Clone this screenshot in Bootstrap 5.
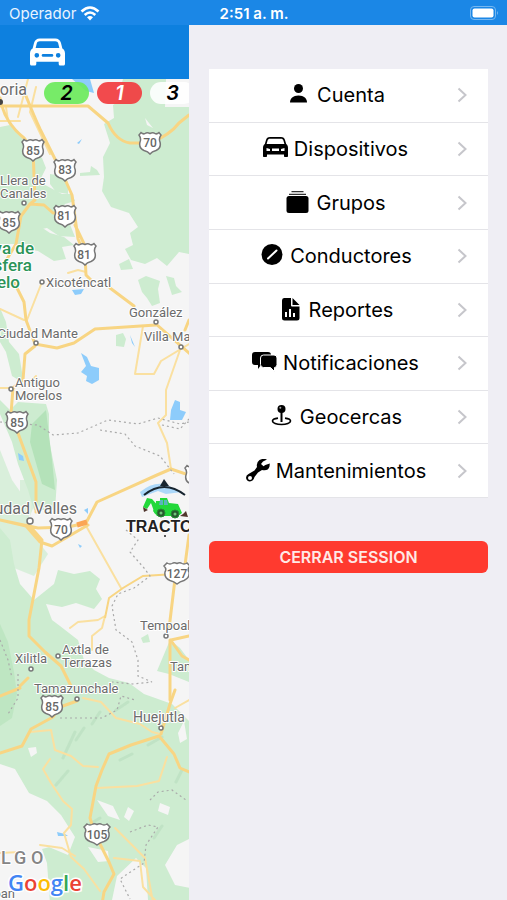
<!DOCTYPE html>
<html lang="es">
<head>
<meta charset="utf-8">
<meta name="viewport" content="width=device-width, initial-scale=1">
<title>Operador</title>
<link rel="stylesheet" href="https://cdn.jsdelivr.net/npm/bootstrap@5.3.0/dist/css/bootstrap.min.css">
<style>
body{font-family:Inter,"Liberation Sans",sans-serif;background:#efeef4;color:#000}
.status-bar{height:25px;background:#1b87e6;color:#e9f4ff;font-size:15px;line-height:25px;padding:2px 8px 0 9px}
.status-time{font-weight:600;color:#fff}
.side-slot{flex:1 1 0}
.map-pane{min-width:0}
.map-head{height:54px;background:#0d80df;padding-left:30px}
.map-area{background:#f5f5f5;min-height:821px}
.map-svg{width:100%;height:100%;left:0;top:0}
.counters{gap:8px;padding:3px 0 0 44px;left:0;top:0}
.pill{flex:0 0 auto;width:45px;height:22px;border-radius:11px;font-size:20px;line-height:22px;font-weight:600;font-style:italic;text-align:center}
.pill-on{background:#6bea5ae8}.pill-off{background:#f2393de8;color:#fff}.pill-all{background:#ffffffe0}
.drawer{flex:0 0 318px;padding:44px 19px 0 20px}
.menu-list{min-height:429px;border-radius:0}
.menu-row{border:0;border-bottom:1px solid #e4e4e8;border-radius:0!important;padding:0 21px 0 5px;font-size:20px;line-height:24px;color:#000;background:#fff}
.menu-body{gap:6px}
.logout{margin-top:43px;height:32px;background:#ff3a2f;color:#ffe9e6;border-radius:6px;font-size:16px;line-height:20px;font-weight:600;padding:0}
.logout:hover{background:#e8342a;color:#fff}
.town{font-family:Roboto,sans-serif;fill:#6b6b6b;stroke:#fff;stroke-width:2px;paint-order:stroke;stroke-linejoin:round;font-size:13px}
.town-md{font-size:14px}
.town-lg{font-size:16px}
.park{font-size:17px;fill:#2b9458;font-weight:500}
.region{font-size:18px;font-weight:500;fill:#858585}
.route{font-family:Roboto,sans-serif;font-size:12px;font-weight:500;fill:#666;text-anchor:middle}
.unit{font:bold 16px "Liberation Sans",sans-serif;fill:#222;stroke:#fff;stroke-width:2px;paint-order:stroke}
.brand{font:600 22px "Open Sans",sans-serif;stroke:#fff;stroke-width:3px;paint-order:stroke}
</style>
<script src="https://cdn.jsdelivr.net/npm/bootstrap@5.3.0/dist/js/bootstrap.bundle.min.js"></script>
</head>
<body>
<svg class="d-none" aria-hidden="true">
  <symbol id="car" viewBox="0 0 36 28"><path fill-rule="evenodd" d="M10 0h16c3 0 5 1.700 5.800 4.500l1.500 6C35 11.500 36 13 36 15.500V26c0 1.200-.8 2-2 2h-2.500c-1.200 0-2-.8-2-2v-2h-23v2c0 1.200-.8 2-2 2H2c-1.200 0-2-.8-2-2V15.500c0-2.500 1-4 2.700-5l1.500-6C5 1.700 7 0 10 0zM10 3C8.500 3 7.500 3.700 7 5L5.800 10h24.400L29 5c-.5-1.300-1.500-2-3-2zM7 15a2.400 2.400 0 100 4.800A2.400 2.400 0 007 15zm22 0a2.400 2.400 0 100 4.800A2.400 2.400 0 0029 15zm-15.500 1a1.500 1.500 0 000 3h9a1.500 1.500 0 000-3z"/></symbol>
  <symbol id="carbox" viewBox="0 0 25 20"><path fill-rule="evenodd" d="M7 0h11c2.300 0 3.500 1.200 4 3l1.200 4C24.500 8 25 9 25 11v8c0 .6-.4 1-1 1h-2c-.6 0-1-.4-1-1v-1.500H4V19c0 .6-.4 1-1 1H1c-.6 0-1-.4-1-1v-8c0-2 .5-3 1.800-4L3 3c.5-1.800 1.700-3 4-3zM7 1.700C5.700 1.700 5 2.300 4.600 3.500L3.600 7h17.800l-1-3.500C20 2.300 19.300 1.700 18 1.700zM3.500 11v3H7v-2zm5.500.5V14h7v-2.500zm12.500-.5L18 12v2h3.500z"/></symbol>
  <symbol id="chevron" viewBox="0 0 10 16"><path d="M1.500 1.500L8.500 8l-7 6.500" fill="none" stroke="#c6c6cb" stroke-width="2"/></symbol>
  <symbol id="shield" viewBox="-12 -12 24 24"><path d="M-9-10.500Q-6.500-8-4-10-2-10.500 0-9.500 2-10.500 4-10 6.500-8 9-10.500L11-8Q8.500-4.500 10-1 11.500 5 6 7.500 2 8.500 0 11-2 8.500-6 7.500-11.500 5-10-1-8.500-4.500-11-8z" fill="#fff" stroke="#777" stroke-width="1.500"/></symbol>
</svg>
<div class="d-flex flex-column min-vh-100">
  <header class="status-bar d-flex align-items-center">
    <div class="side-slot d-flex align-items-center gap-1"><span>Operador</span>
      <svg width="20" height="15" viewBox="0 0 20 15" aria-hidden="true"><g fill="none" stroke="#fff" stroke-width="2.600"><path d="M1.500 5.500Q10-2.500 18.500 5.500M4.700 9Q10 4 15.300 9"/></g><path d="M7 11.200q3-2.400 6 0l-3 3.300z" fill="#fff"/></svg>
    </div>
    <span class="status-time">2:51 a. m.</span>
    <div class="side-slot d-flex justify-content-end"><svg width="29" height="15" viewBox="0 0 29 15" aria-label="Batería" role="img"><rect x=".5" y=".5" width="25" height="13" rx="3.500" fill="none" stroke="#76b7f0"/><rect x="2.500" y="2.500" width="21" height="9" rx="2" fill="#fff"/><path d="M27 5q2 2 0 4z" fill="#76b7f0"/></svg></div>
  </header>
  <div class="d-flex flex-grow-1">
    <main class="map-pane d-flex flex-column flex-grow-1 overflow-hidden">
      <div class="map-head d-flex align-items-center"><svg width="35" height="28" fill="#fff" role="img" aria-label="Dispositivos"><use href="#car"/></svg></div>
      <div class="map-area flex-grow-1 position-relative overflow-hidden">
        <svg class="map-svg position-absolute" viewBox="0 79 189 821" preserveAspectRatio="xMinYMin slice">
          <g fill="#cdecd0">
            <path d="M0 127l10-2 12 13 8 12 12 8 4 10-7 14 8 4 15 8 10 0 3 7-10 3-6 10 10 8 6 15-16-1-12-8-10 2-8 14H0z"/>
            <path d="M118 96l5-17h43l-1 28 24 0v147l-10-2-12 14-10-8-12 6-14-4-6-11 8-4-3-12 8-6-9-14-18-6-9-16 2-14-1-20 7-14-6-19 10-6-1-13 9-6z"/>
            <path d="M80 173l10-1 1-6 6 4 3 5-20 1zM50 174l12 2 6 6 0 12-12-2-6-8zM38 225l12 8 14 4 10 8-12 2 4 12-12 2-16-10-12-2 6-12zM119 264l10-5 4 10-12 1zM138 280l8-4 14 5-2 8 2 14-8 3-5-8-5-6zM166 276l8 2 2 8 6 6-10 3zM116 335l7-2 3 6-2 8-8-1z"/>
            <path d="M0 308l6 14 3 20 10 12 3 18 0 10-10-6-6-24-6-10zM18 402l28 2 3 10 0 26 4 20 4 20-2 30H34l-6-20-10-26-6-22-12-28v-14l10 10z"/>
            <path d="M0 450l12 30 14 20 6 34 16 20 0 0-14 22-20-8-16-30-16-20zM20 480h14v26l-4 10-10-16z" opacity=".7"/>
            <path d="M0 528l10 12 4 24 6 20 14 16 10-8 10-8 4-14 16 4 16-3 10 8-4 10 6 10-8 10-18-6-14 4-16-3 6 16 8 6 18 14 6 20 10 10 15 8 20 5 15 11 28 10 22 22 11 22v75l-12 14-16 8-12 20 10 20 20 4v31h-46l-12-30-20-5-5 36H62l-12-18-3-40-5-14 15-4-20-12-20-8-3-26-14-10v-54l-8-8z"/>
            <path d="M0 802l12-3 16 8-5 10-11 10-12-3zM141 638l7-4 2 8-7 1zM170 640l10 8 9 12v22l-20-8-12-3z"/>
          </g>
          <g fill="#b4e2b9"><path d="M32 424l14-14 6 50 3 30-13-6-12-42z"/><path d="M0 624l8 18 6 30 3 22-5 24-12 8z" opacity=".6"/></g>
          <g fill="#f5f5f5"><path d="M28 748l8-1 1 6-6 4zM0 764l15 5 14 24 18 8 14 14 14 22-7 18-24-10-16 2-28-12zM97 800l16 6 7 14-12-4zM88 847l20 4 1 10-11 1zM160 803l10 4-2 8-10-4zM136 858l10 10 2 32h-36l5-24zM178 733l6-12 3 18-7 4zM128 807l6 4-5 10-5-4zM145 118l8 10-6-3z"/></g>
          <g stroke="#a9d5b3" stroke-width="3" opacity=".35" fill="none" stroke-linecap="round"><path d="M63 758l12-26M56 785l12-14M128 702l-12 8M84 728l-8 12M100 712l-8 12M148 745l14-8M120 760l12-6M154 838l8-12M176 782l6-12M90 824l10-6"/></g>
          <g fill="#8dccfb"><path d="M72 79h18l4 14-8-2zM72 290l12-1-3 5-6 1zM81 353l6 4 4 9 8 2 0 12-7 4-6-3 1-5-6-4 5-6zM130 335l5 12-3-4zM171 410l4-10 5 2 0 8 6 2-4 8-12 0zM18 453l5 3 1 5-5-1zM77 143l5-4-3 5zM84 510l4-2 0 6zM57 832l8 2 3 2-10 0zM78 544l4 2-2 2z"/><path d="M140 492q12-10 24-8l18 8-16 2-8-3-16 6z" opacity=".7"/></g>
          <g fill="none" stroke="#fae0a0" stroke-width="2" stroke-linejoin="round" stroke-linecap="round">
            <path d="M0 309l24 11M42 282L27 320M28 384l8-8M0 388h12M143 326l-8 48h19l7-13 28-17M180 350l-14 40 0 25-8 8 9 20 4 26M85 524l36 64M68 273l10-3 8 2M36 87L30 112l20 42M0 121h20M8 121L6 107M28 79l-10 38M189 700l-14 8M30 732l21-2 4 20 16 6 12 10 15 1M50 759l-7 10 8 14 12 18 9 8-1 16-7 8 7 24 13 12 16 22M97 788l40-2 22-5 8-24M115 828l30 30 9 50M114 858l26 3 3 26 12 13M40 845l22 3 13 8M20 852L0 853M83 698l18 4 15 16 24 6 12 8 8 2M70 628l8-6 20-2 7-4M105 616l-3 12-10 8 0 14"/>
          </g>
          <g fill="none" stroke="#f8d583" stroke-width="3" stroke-linejoin="round" stroke-linecap="round">
            <path d="M0 98q4 24 24 40L33 150l2 50-5 4-9 12-5 28-12 20M0 106h88l20 17q8 18 22 20h20q20-8 29-20l10-8M26 96q8 20 14 33l24 48 8 18 6 44 7 16 1 20 6 6M30 204l14 1 9 8h12M75 225l12 25"/>
            <path d="M14 282l10 20 2 18 9 24M35 344l22 4 17-5 21-14 61-4M110 288l24 18M156 324l34 30M35 346l-10 8-2 26-10 8-2 26 11 30 14 38 0 30M189 320l-4 10M189 475l-18-6-14 6-60 27-11 21-18 4-30 1-38-8M0 520l26 6 14 16 12 4 12-7 24-14M28 524l14 16-3 28-10 52 0 16 16 16 16 14 10 20M189 535l-4 30-10 14-6 50M170 640v60"/>
            <path d="M20 688l-20 8M28 678l-8 8"/>
            <path d="M0 753l22-7 9-17 22-12 7-10 17-6M189 772l-9-4-6-14-15-18-28 9-22 9-7 16-6 16-6 32 5 16 14 28 5 12-10 18-3 18M175 690l-5 14-9 30M171 640l18-4M172 642l10 14 7 4"/>
          </g>
          <path d="M175 574l-32 2-20 12-14 10-4 20" fill="none" stroke="#f8d583" stroke-width="2"/>
          <path d="M77 525l10-3" stroke="#fba655" stroke-width="5"/>
          <g fill="none" stroke="#aaa" stroke-width="1.200" stroke-dasharray="2 3"><path d="M0 422l10 1 28 2 15 10 25-2 30-13 30 4 20-6 22 6 9-2M100 430l25 4 10 12 25 10 14 18M162 425l18 4 9-10M126 530l12 10-8 12 14 16 6 8-16 12-16 6-6 12 4 24 16 12 6 18 0 16 14 6-20 2-20-2M0 640l8 20 4 18M18 674v24l-10 16M60 718h42l15-8 4-14 14 4M150 800l8-8 14-2 14 10M130 832l18-7 10 2-12 18-2 18-24 16 10 20"/></g>
          <g><use href="#shield" x="21" y="138" width="24" height="24"/><use href="#shield" x="53" y="158" width="24" height="24"/><use href="#shield" x="138" y="131" width="24" height="24"/><use href="#shield" x="53" y="204" width="24" height="24"/><use href="#shield" x="-3" y="210" width="24" height="24"/><use href="#shield" x="73" y="242" width="24" height="24"/><use href="#shield" x="5" y="410" width="24" height="24"/><use href="#shield" x="49" y="517" width="24" height="24"/><use href="#shield" x="40" y="694" width="24" height="24"/>
          <g id="wide" transform="translate(177 573)"><path d="M-10-10Q-7-8-4-10-2-10.500 0-9.500 2-10.500 4-10 7-8 10-10L13-7Q10-4 12-1 13 5 7 7.500 3 8.500 0 11-3 8.500-7 7.500-13 5-12-1-10-4-13-7z" fill="#fff" stroke="#777" stroke-width="1.500"/></g><use href="#wide" x="-80" y="261"/><use href="#shield" x="184" y="464" width="24" height="24"/></g>
          <g class="route"><text x="33" y="155">85</text><text x="65" y="174">83</text><text x="150" y="147">70</text><text x="64" y="220">81</text><text x="9" y="227">85</text><text x="84" y="259">81</text><text x="17" y="427">85</text><text x="61" y="534">70</text><text x="52" y="711">85</text><text x="177" y="578">127</text><text x="97" y="839">105</text></g>
          <g fill="#fff" stroke="#777" stroke-width="1.500"><circle cx="24" cy="203" r="2"/><circle cx="42" cy="282" r="2"/><circle cx="156" cy="322" r="2"/><circle cx="36" cy="343" r="2"/><circle cx="181" cy="347" r="2"/><circle cx="11" cy="389" r="2"/><circle cx="30" cy="521" r="3"/><circle cx="166" cy="636" r="2"/><circle cx="58" cy="656" r="2"/><circle cx="31" cy="669" r="2"/><circle cx="77" cy="699" r="2"/><circle cx="161" cy="728" r="2"/></g>
          <circle cx="0" cy="102" r="3" fill="#444"/>
          <g class="town">
            <text x="27" y="95" text-anchor="end" class="town-lg">Victoria</text>
            <text x="0" y="185">Llera de</text><text x="0" y="198">Canales</text><text x="46" y="287">Xicoténcatl</text>
            <text x="34" y="254" text-anchor="end" class="park">Reserva de</text><text x="32" y="271" text-anchor="end" class="park">la Biosfera</text><text x="20" y="288" text-anchor="end" class="park">El Cielo</text>
            <text x="129" y="317">González</text><text x="78" y="338" text-anchor="end">Ciudad Mante</text><text x="144" y="341">Villa Manuel</text>
            <text x="15" y="387">Antiguo</text><text x="15" y="400">Morelos</text><text x="77" y="514" text-anchor="end" class="town-lg">Ciudad Valles</text>
            <text x="140" y="630">Tempoal</text><text x="62" y="654">Axtla de</text><text x="62" y="667">Terrazas</text><text x="15" y="663">Xilitla</text><text x="170" y="671">Tantoyuca</text>
            <text x="34" y="693">Tamazunchale</text><text x="133" y="722" class="town-md">Huejutla</text>
            <text y="864" class="region"><tspan x="1">L</tspan><tspan x="14">G</tspan><tspan x="31">O</tspan></text><text x="15" y="898" text-anchor="end">Huichapan</text>
          </g>
          <text class="brand" x="8" y="891"><tspan fill="#4285f4">G</tspan><tspan fill="#ea4335">o</tspan><tspan fill="#fbbc05">o</tspan><tspan fill="#4285f4">g</tspan><tspan fill="#34a853">l</tspan><tspan fill="#ea4335">e</tspan></text>
          <path d="M144 495q20-16 41 0" fill="none" stroke="#17252f" stroke-width="2"/><path d="M160 486l4-7 5 7z" fill="#17252f"/>
          <g fill="#22d83a"><path d="M156 505v-4h4v-3h7l2 5 9 1 4 9-4 3h-21l-4-5z"/><path d="M155 514l-4-11-4 6-4-2 4-9 5 1 9 10z"/></g>
          <path d="M160 500h3v5h-4zM164 500h3l1 5h-4z" fill="#5ab5bb"/><g fill="#28582e" stroke="#228c31"><circle cx="161" cy="513" r="4"/><circle cx="175" cy="514" r="4"/></g><g fill="#71c579"><circle cx="161" cy="513" r="1.500"/><circle cx="175" cy="514" r="1.500"/></g><path d="M180 516l3-2 3-3 2 6zM143 507l5 3-4 2z" fill="#50352c"/>
          <text class="unit" x="126" y="532">TRACTOR</text><circle cx="165" cy="536" r="1" fill="#222"/>
        </svg>
        <div class="counters position-absolute d-flex"><span class="pill pill-on">2</span><span class="pill pill-off">1</span><span class="pill pill-all">3</span></div>
      </div>
    </main>
    <aside class="drawer">
      <nav class="menu-list list-group" aria-label="Menú">
        <a href="#cuenta" class="menu-row list-group-item list-group-item-action d-flex flex-fill align-items-center"><span class="menu-body d-flex flex-fill align-items-center justify-content-center"><svg width="25" height="24" viewBox="0 0 25 24"><circle cx="12.500" cy="5.500" r="4.500"/><path d="M4 19.500c0-4 3-7 8.500-7s8.500 3 8.500 7z"/></svg><span>Cuenta</span></span><svg width="10" height="16"><use href="#chevron"/></svg></a>
        <a href="#dispositivos" class="menu-row list-group-item list-group-item-action d-flex flex-fill align-items-center"><span class="menu-body d-flex flex-fill align-items-center justify-content-center"><svg width="25" height="24" viewBox="0 0 25 24"><use href="#carbox" width="25" height="20"/></svg><span>Dispositivos</span></span><svg width="10" height="16"><use href="#chevron"/></svg></a>
        <a href="#grupos" class="menu-row list-group-item list-group-item-action d-flex flex-fill align-items-center"><span class="menu-body d-flex flex-fill align-items-center justify-content-center"><svg width="25" height="24" viewBox="0 0 25 24"><rect x="1.500" y="5" width="22" height="17" rx="2.500"/><path d="M4 3.300h17M6.500.5h12" stroke="#333" stroke-width="1.300"/></svg><span>Grupos</span></span><svg width="10" height="16"><use href="#chevron"/></svg></a>
        <a href="#conductores" class="menu-row list-group-item list-group-item-action d-flex flex-fill align-items-center"><span class="menu-body d-flex flex-fill align-items-center justify-content-center"><svg width="25" height="24" viewBox="0 0 25 24"><circle cx="13" cy="10.500" r="10.500"/><path d="M9 14.500l8.500-8" stroke="#fff" stroke-width="2" stroke-linecap="round"/></svg><span>Conductores</span></span><svg width="10" height="16"><use href="#chevron"/></svg></a>
        <a href="#reportes" class="menu-row list-group-item list-group-item-action d-flex flex-fill align-items-center"><span class="menu-body d-flex flex-fill align-items-center justify-content-center"><svg width="25" height="24" viewBox="0 0 25 24"><path d="M6 0h7v7.500q0 1 1 1h7.500V20q0 2.500-2.500 2.500H6.500Q4 22.500 4 20V2.500Q4 0 6 0zM14.500 0l7 7h-7z"/><path d="M8 19v-5M12 19v-8M16 19v-4" stroke="#fff" stroke-width="2"/></svg><span>Reportes</span></span><svg width="10" height="16"><use href="#chevron"/></svg></a>
        <a href="#notificaciones" class="menu-row list-group-item list-group-item-action d-flex flex-fill align-items-center"><span class="menu-body d-flex flex-fill align-items-center justify-content-center"><svg width="25" height="24" viewBox="0 0 25 24"><path d="M3 1h13q3 0 3 3v7q0 3-3 3h-7l-3 4v-4H3q-3 0-3-3V4q0-3 3-3z"/><path d="M11.500 4H22q3 0 3 3v6.500q0 3-2.500 3v4l-4-4h-7q-3 0-3-3V7q0-3 3-3z" stroke="#fff" stroke-width="1"/></svg><span>Notificaciones</span></span><svg width="10" height="16"><use href="#chevron"/></svg></a>
        <a href="#geocercas" class="menu-row list-group-item list-group-item-action d-flex flex-fill align-items-center"><span class="menu-body d-flex flex-fill align-items-center justify-content-center"><svg width="25" height="24" viewBox="0 0 25 24"><path d="M12.500 6v11" stroke="#000" stroke-width="2"/><path d="M9 13.200c-3.500.5-5.500 1.300-5.500 2.800 0 2 4 3.500 9 3.500s9-1.500 9-3.500c0-1.500-2-2.300-5.500-2.800" fill="none" stroke="#000" stroke-width="1.700"/><circle cx="12.500" cy="4" r="4"/><circle cx="11.300" cy="2.800" r="1" fill="#aaa"/></svg><span>Geocercas</span></span><svg width="10" height="16"><use href="#chevron"/></svg></a>
        <a href="#mantenimientos" class="menu-row list-group-item list-group-item-action d-flex flex-fill align-items-center"><span class="menu-body d-flex flex-fill align-items-center justify-content-center"><svg width="25" height="24" viewBox="0 0 25 24"><path fill-rule="evenodd" d="M22 .5Q18-1 14.500 1 11 3.500 12 8L9.500 11.500l-6 3.500q-3.500 2-2 5.500Q3.500 24 7.500 21.500q1.500-1 2-3.500l3.500-4.500 4-2.500q6 1.500 7.500-3.500l.3-3-4.500 1.500-1.800 1.300-2.500-2.300 2-2.500zM5 17a2 2 0 100 4 2 2 0 000-4z"/></svg><span>Mantenimientos</span></span><svg width="10" height="16"><use href="#chevron"/></svg></a>
      </nav>
      <button type="button" class="logout btn w-100">CERRAR SESSION</button>
    </aside>
  </div>
</div>
</body>
</html>
